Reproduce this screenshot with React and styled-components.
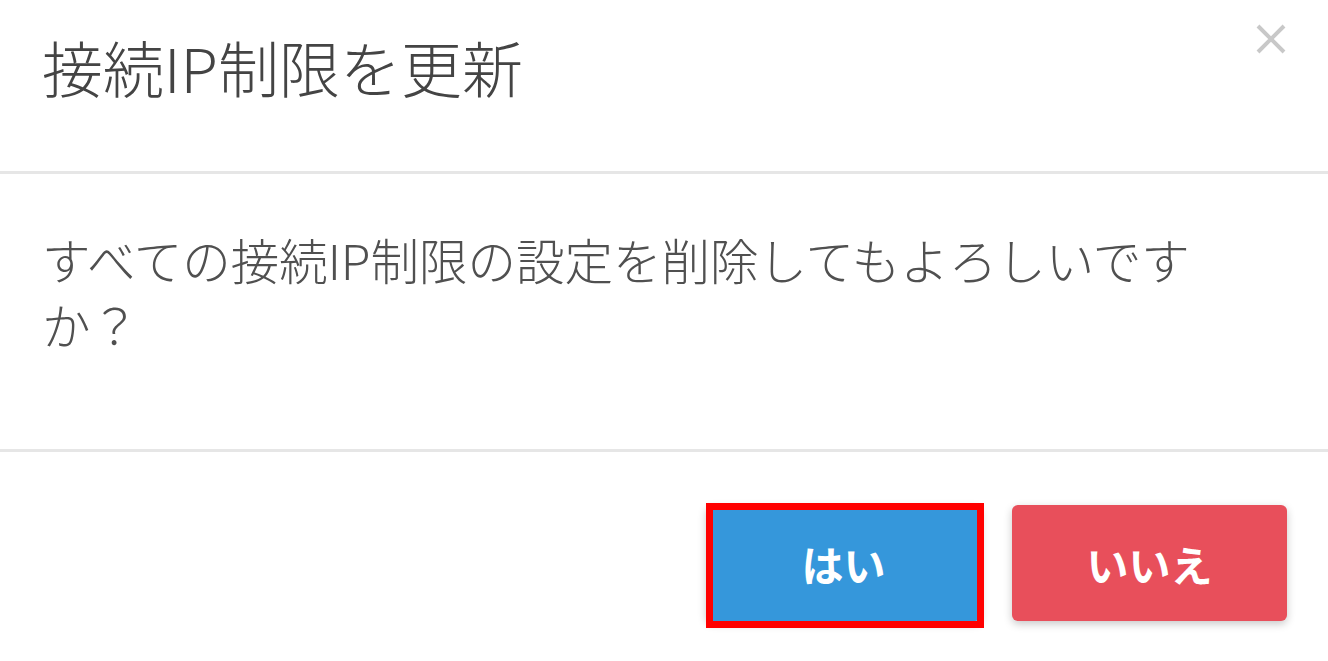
import React from 'react'
import styled, { createGlobalStyle } from 'styled-components'

const GlobalStyle = createGlobalStyle`
  html, body {
    margin: 0;
    padding: 0;
    background: #ffffff;
  }
  body {
    font-family: 'Noto Sans CJK JP', 'Noto Sans', sans-serif;
  }
`;

const Modal = styled.div`
  width: 1328px;
  height: 661px;
  background: #ffffff;
  overflow: hidden;
  box-sizing: border-box;
`;

const Header = styled.div`
  display: flex;
  justify-content: space-between;
  align-items: flex-start;
  height: 174px;
  box-sizing: border-box;
  padding: 23px 41px 0 42px;
  border-bottom: 3px solid #e6e6e6;
`;

const Title = styled.h4`
  margin: 8px 0 0;
  font-size: 61px;
  line-height: 72px;
  font-weight: 300;
  color: #444444;
`;

const Close = styled.button`
  width: 32px;
  height: 32px;
  padding: 0;
  border: none;
  background: transparent;
  cursor: pointer;

  svg {
    display: block;
  }
`;

const Body = styled.div`
  padding: 53px 112px 92px 42px;
  border-bottom: 3px solid #e6e6e6;
`;

const Message = styled.p`
  margin: 0;
  font-size: 48.5px;
  line-height: 65px;
  font-weight: 300;
  color: #505050;
`;

const Footer = styled.div`
  display: flex;
  justify-content: flex-end;
  gap: 31px;
  padding: 53px 41px 0 42px;
`;

const ButtonWrap = styled.div`
  position: relative;
`;

const Button = styled.button`
  width: 275px;
  height: 116px;
  border: none;
  border-radius: 6px;
  background: ${p => (p.$tone === 'danger' ? '#e84f5b' : '#3597db')};
  color: #ffffff;
  font-family: 'Noto Sans CJK JP', sans-serif;
  font-size: 42px;
  font-weight: 700;
  box-shadow: 0 3px 9px rgba(0, 0, 0, 0.22);
  cursor: pointer;
`;

// red annotation frame drawn over the "はい" button
const Highlight = styled.div`
  position: absolute;
  left: 0;
  top: -2px;
  width: 278px;
  height: 125px;
  box-sizing: border-box;
  border: 7px solid #ff0000;
  pointer-events: none;
`;

const CloseIcon = () => (
  <svg width="32" height="32" viewBox="0 0 32 32">
    <path d="M3 3 L29 29 M29 3 L3 29" stroke="#c8c8c8" strokeWidth="4" strokeLinecap="butt" />
  </svg>
)

const App = () => {
  return (
    <>
      <GlobalStyle />
      <Modal>
        <Header>
          <Title>接続IP制限を更新</Title>
          <Close aria-label="閉じる">
            <CloseIcon />
          </Close>
        </Header>
        <Body>
          <Message>すべての接続IP制限の設定を削除してもよろしいですか？</Message>
        </Body>
        <Footer>
          <ButtonWrap>
            <Button>はい</Button>
            <Highlight />
          </ButtonWrap>
          <ButtonWrap>
            <Button $tone="danger">いいえ</Button>
          </ButtonWrap>
        </Footer>
      </Modal>
    </>
  )
}

export default App
